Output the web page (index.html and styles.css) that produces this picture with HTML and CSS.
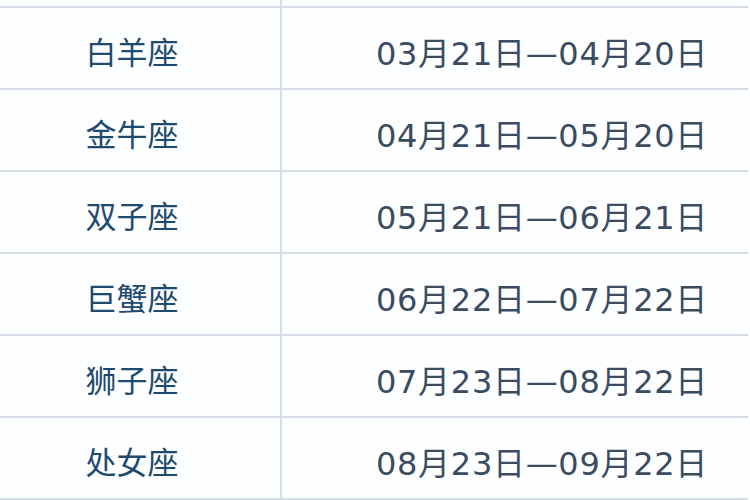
FILE: index.html
```html
<!DOCTYPE html>
<html>
<head>
<meta charset="utf-8">
<link rel="stylesheet" href="styles.css">
</head>
<body>
<div class="table">
  <div class="row top"><div class="name"></div><div class="date"></div></div>
  <div class="row"><div class="name">白羊座</div><div class="date">03月21日—04月20日</div></div>
  <div class="row"><div class="name">金牛座</div><div class="date">04月21日—05月20日</div></div>
  <div class="row"><div class="name">双子座</div><div class="date">05月21日—06月21日</div></div>
  <div class="row"><div class="name">巨蟹座</div><div class="date">06月22日—07月22日</div></div>
  <div class="row"><div class="name">狮子座</div><div class="date">07月23日—08月22日</div></div>
  <div class="row"><div class="name">处女座</div><div class="date">08月23日—09月22日</div></div>
</div>
</body>
</html>
```
FILE: styles.css
```css
html, body {
  margin: 0;
  padding: 0;
  background: #fdfeff;
  overflow: hidden;
}
.table {
  width: 748px;
  font-family: "Noto Sans CJK SC", "Noto Sans", sans-serif;
  border-bottom: 2px solid #d5dde6;
}
.row {
  display: grid;
  grid-template-columns: 282px 1fr;
  height: 80px;
  border-top: 2px solid #d5dde6;
}
.row.top {
  height: 6px;
  border-top: none;
}
.name {
  border-right: 2px solid #d5dde6;
  display: flex;
  align-items: center;
  justify-content: center;
  padding-right: 16px;
  padding-top: 5px;
  font-size: 31px;
  font-weight: 400;
  color: #1f4a70;
}
.date {
  display: flex;
  align-items: center;
  padding-left: 94px;
  padding-top: 5px;
  font-family: "DejaVu Sans", "Noto Sans CJK SC", sans-serif;
  font-size: 32px;
  font-weight: 400;
  letter-spacing: 0.7px;
  color: #3b4b60;
}
```
